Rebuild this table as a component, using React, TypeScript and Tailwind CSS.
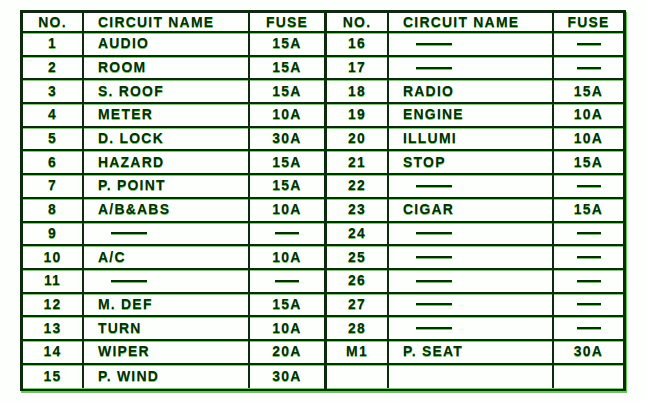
const left: [string, string, string][] = [
  ["1", "AUDIO", "15A"],
  ["2", "ROOM", "15A"],
  ["3", "S. ROOF", "15A"],
  ["4", "METER", "10A"],
  ["5", "D. LOCK", "30A"],
  ["6", "HAZARD", "15A"],
  ["7", "P. POINT", "15A"],
  ["8", "A/B&ABS", "10A"],
  ["9", "-", "-"],
  ["10", "A/C", "10A"],
  ["11", "-", "-"],
  ["12", "M. DEF", "15A"],
  ["13", "TURN", "10A"],
  ["14", "WIPER", "20A"],
  ["15", "P. WIND", "30A"],
];

const right: [string, string, string][] = [
  ["16", "-", "-"],
  ["17", "-", "-"],
  ["18", "RADIO", "15A"],
  ["19", "ENGINE", "10A"],
  ["20", "ILLUMI", "10A"],
  ["21", "STOP", "15A"],
  ["22", "-", "-"],
  ["23", "CIGAR", "15A"],
  ["24", "-", "-"],
  ["25", "-", "-"],
  ["26", "-", "-"],
  ["27", "-", "-"],
  ["28", "-", "-"],
  ["M1", "P. SEAT", "30A"],
  ["", "", ""],
];

const ink = "text-[#0c2a0c] [text-shadow:0_1px_0_#5fd34f]";

function Dash({ w }: { w: string }) {
  return <span className={`block h-[2px] bg-[#0c2a0c] shadow-[0_1px_0_#5fd34f] ${w}`} />;
}

function Half({ rows, cols, last }: { rows: [string, string, string][]; cols: string; last?: boolean }) {
  const cell = "flex items-center border-[#0c2a0c] shadow-[0_1px_0_#6ad85a]";
  return (
    <div className={`grid ${cols} ${last ? "flex-1" : "border-r-[3px] border-[#0c2a0c]"}`}>
      {["NO.", "CIRCUIT NAME", "FUSE"].map((h, i) => (
        <div
          key={h}
          className={`${cell} h-[20px] border-b-2 ${i < 2 ? "border-r-2" : ""} ${i === 1 ? "pl-[14px]" : "justify-center"}`}
        >
          {h}
        </div>
      ))}
      {rows.map((r, ri) => {
        const bb = ri < rows.length - 1 ? "border-b-2" : "";
        return [
          <div key={`n${ri}`} className={`${cell} h-[23.7px] ${bb} border-r-2 justify-center`}>
            {r[0]}
          </div>,
          <div key={`c${ri}`} className={`${cell} h-[23.7px] ${bb} border-r-2 pl-[14px]`}>
            {r[1] === "-" ? <span className="pl-[13px]"><Dash w="w-[36px]" /></span> : r[1]}
          </div>,
          <div key={`f${ri}`} className={`${cell} h-[23.7px] ${bb} justify-center`}>
            {r[2] === "-" ? <Dash w="w-[24px]" /> : r[2]}
          </div>,
        ];
      })}
    </div>
  );
}

export default function App() {
  return (
    <div className="w-[646px] h-[402px] bg-[#fcfffc] pl-[20px] pt-[10px]">
      <div
        className={`w-[606px] flex border-[3px] border-[#0c2a0c] shadow-[1px_2px_0_#5fd34f] text-[14px] font-bold tracking-[1.2px] ${ink}`}
        style={{ fontFamily: '"Liberation Sans", Arial, sans-serif' }}
      >
        <Half rows={left} cols="grid-cols-[61px_166px_74px]" />
        <Half rows={right} cols="grid-cols-[62px_165px_1fr]" last />
      </div>
    </div>
  );
}
